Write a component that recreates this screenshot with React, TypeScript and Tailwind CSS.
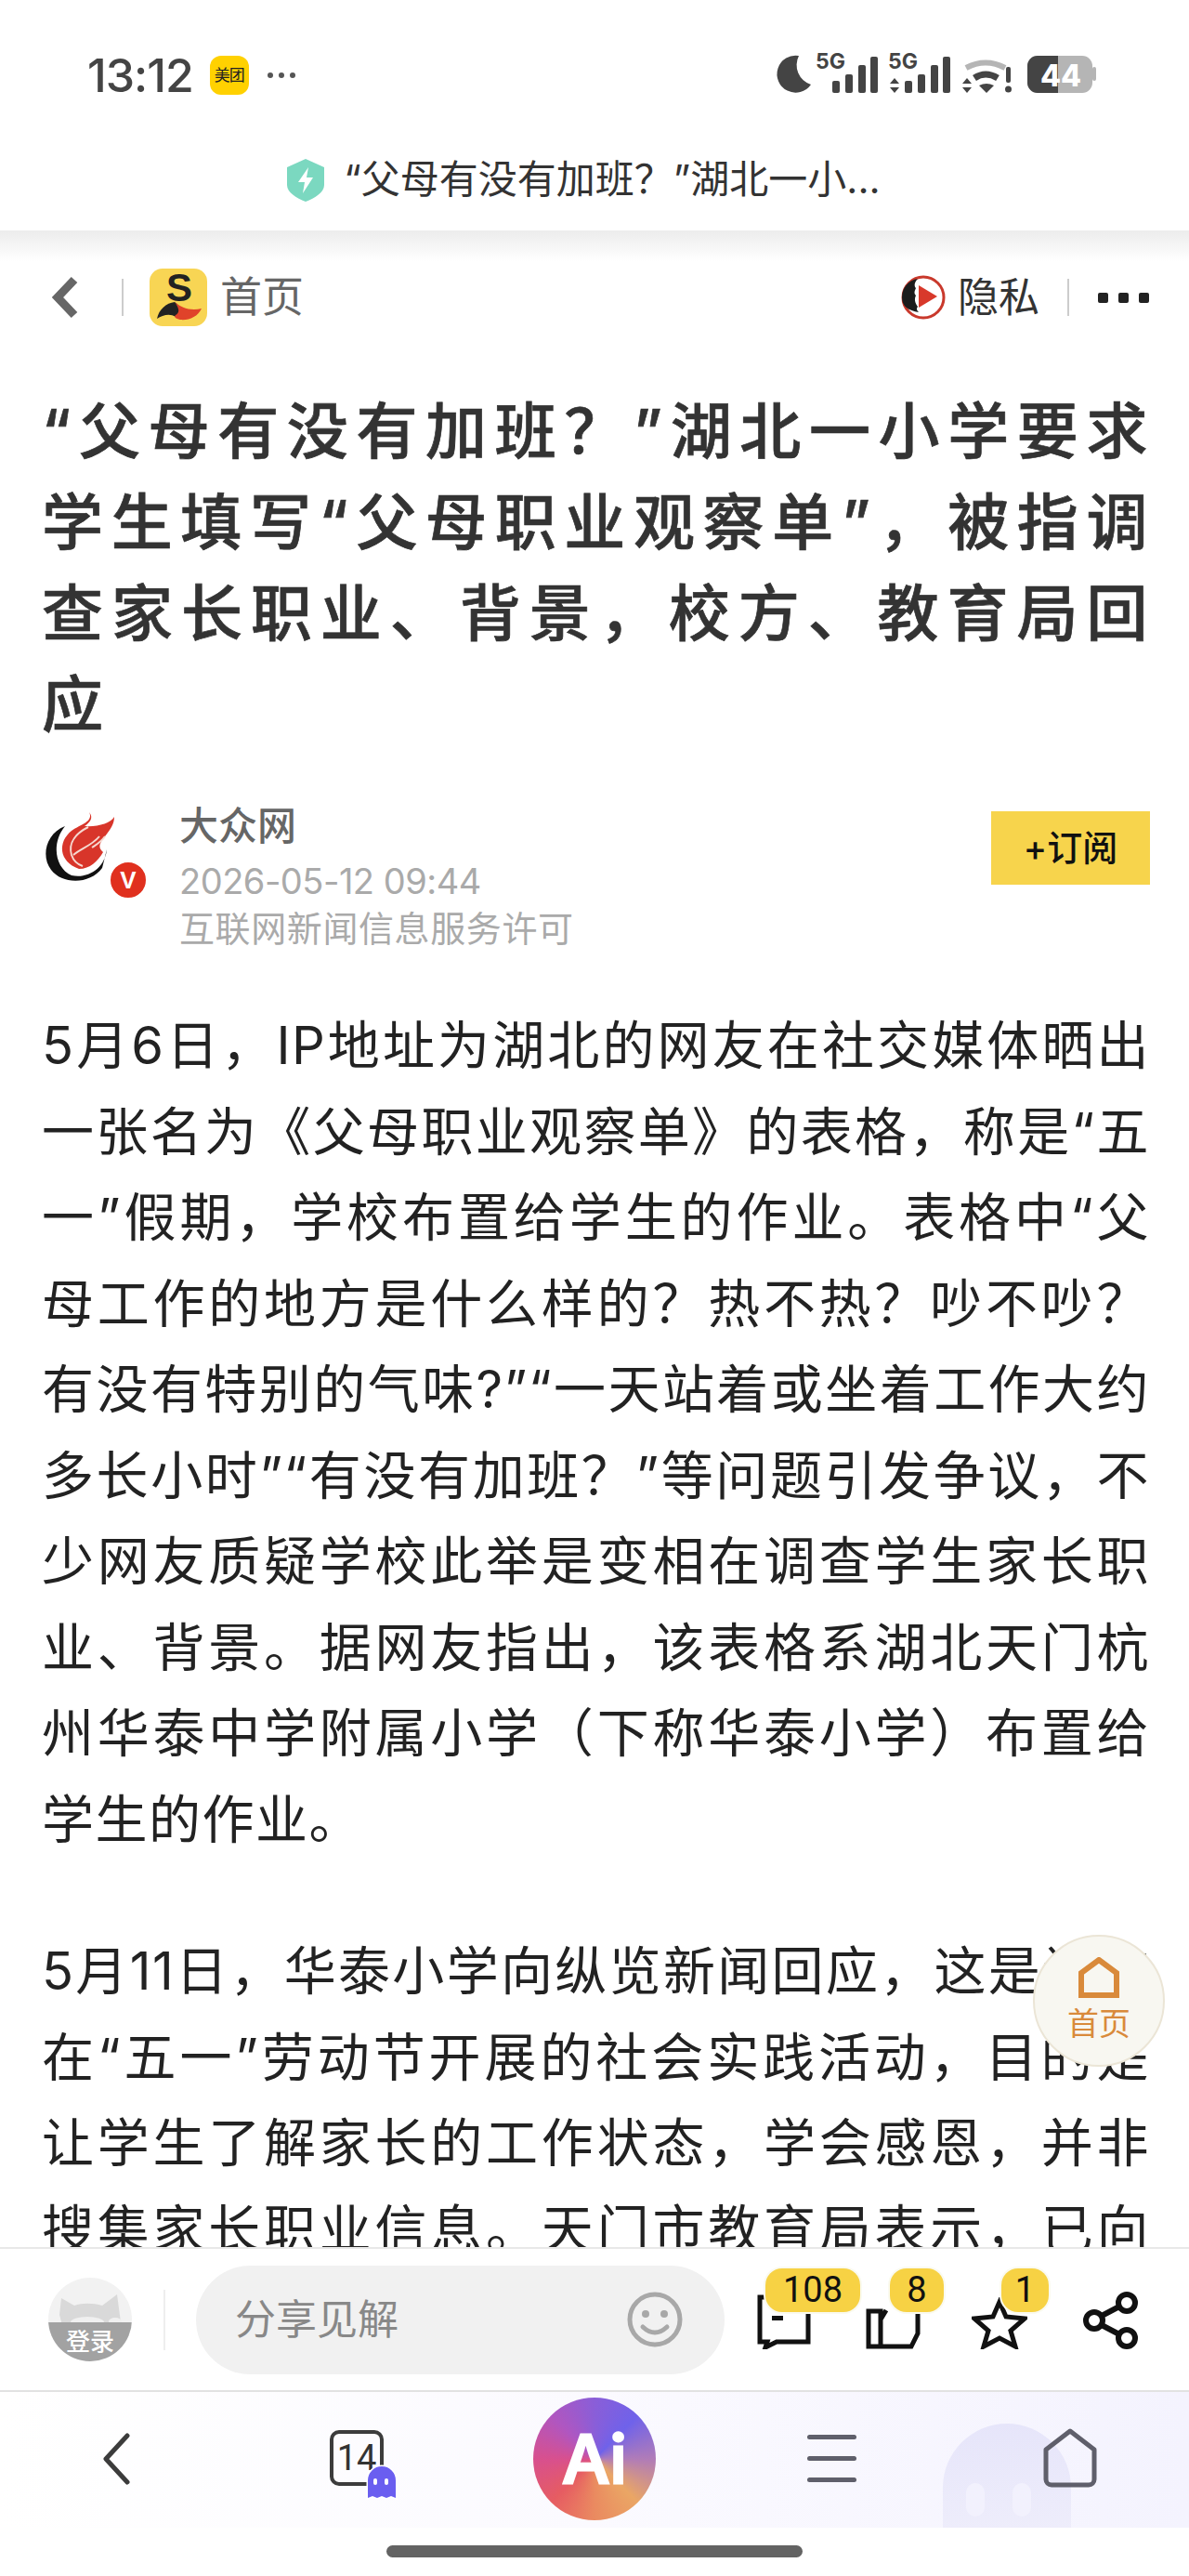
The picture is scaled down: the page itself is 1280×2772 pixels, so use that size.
import React from "react";

const FONT = "font-['Inter','Noto_Sans_CJK_SC','Noto_Sans',sans-serif]";

const titleLines = [
  "“父母有没有加班？”湖北一小学要求",
  "学生填写“父母职业观察单”，被指调",
  "查家长职业、背景，校方、教育局回",
  "应",
];
const p1 = [
  "5月6日，IP地址为湖北的网友在社交媒体晒出",
  "一张名为《父母职业观察单》的表格，称是“五",
  "一”假期，学校布置给学生的作业。表格中“父",
  "母工作的地方是什么样的？热不热？吵不吵？",
  "有没有特别的气味?”“一天站着或坐着工作大约",
  "多长小时”“有没有加班？”等问题引发争议，不",
  "少网友质疑学校此举是变相在调查学生家长职",
  "业、背景。据网友指出，该表格系湖北天门杭",
  "州华泰中学附属小学（下称华泰小学）布置给",
  "学生的作业。",
];
const p2 = [
  "5月11日，华泰小学向纵览新闻回应，这是该校",
  "在“五一”劳动节开展的社会实践活动，目的是",
  "让学生了解家长的工作状态，学会感恩，并非",
  "搜集家长职业信息。天门市教育局表示，已向",
];

function Lines({ lines, lastFull }: { lines: string[]; lastFull?: boolean }) {
  return (
    <>
      {lines.map((l, i) => (
        <div key={l} className={i < lines.length - 1 || lastFull ? "[text-align:justify] [text-align-last:justify]" : ""}>
          {l}
        </div>
      ))}
    </>
  );
}

function StatusIcons() {
  return (
    <svg width="370" height="56" viewBox="832 50 370 56" className="block">
      <path d="M860 60a20 20 0 1 0 13 31a22 22 0 0 1-13-31z" fill="#444" />
      <text x="878" y="74" fontFamily="Inter" fontWeight="700" fontSize="23" fill="#444">5G</text>
      <g fill="#444">
        <rect x="896" y="87" width="8" height="13" rx="2" />
        <rect x="910" y="80" width="8" height="20" rx="2" />
        <rect x="924" y="70" width="8" height="30" rx="2" />
        <rect x="937" y="61" width="8" height="39" rx="2" />
      </g>
      <text x="956" y="74" fontFamily="Inter" fontWeight="700" fontSize="23" fill="#444">5G</text>
      <g fill="#444">
        <path d="M963 84l5 6h-10zM963 100l5-6h-10z" />
        <rect x="974" y="87" width="8" height="13" rx="2" />
        <rect x="988" y="80" width="8" height="20" rx="2" />
        <rect x="1002" y="70" width="8" height="30" rx="2" />
        <rect x="1015" y="61" width="8" height="39" rx="2" />
        <path d="M1041 84l5 6h-10zM1041 100l5-6h-10z" />
      </g>
      <path d="M1040 73q21-11 42 0" stroke="#b5b5b5" strokeWidth="6" fill="none" />
      <path d="M1049 84q12-8 25 0" stroke="#444" strokeWidth="7" fill="none" />
      <path d="M1054 92q8-4 16 0l-8 8z" fill="#444" />
      <rect x="1083" y="72" width="5" height="17" rx="2" fill="#444" />
      <circle cx="1085.500" cy="96" r="3.500" fill="#444" />
      <rect x="1106" y="60" width="70" height="40" rx="11" fill="#b5b5b5" />
      <path d="M1117 60h22v40h-22a11 11 0 0 1-11-11v-18a11 11 0 0 1 11-11z" fill="#444" />
      <rect x="1176" y="72" width="4" height="15" rx="2" fill="#b5b5b5" />
      <text x="1120" y="93" fontFamily="Inter" fontWeight="800" fontSize="32" fill="#fff">44</text>
    </svg>
  );
}

function Flame() {
  return (
    <svg width="90" height="92" viewBox="10 8 90 92" className="block">
      <path d="M35 27C14 35 9 60 20 74c12 16 42 16 55-2l5-20c-2 20-20 32-38 28C24 72 20 45 35 27z" fill="#111" />
      <path d="M61 12c5 10-9 13-19 20C27 44 28 65 50 73c12 0 20-8 26-18-6-5-4-10 2-17 6-8 10-13 10-21-4 7-18 11-32 10 6-4 10-9 5-15z" fill="#d8352a" />
      <path d="M60 28c-12 6-22 16-18 30 2 6 6 10 12 12M72 38c-8 10-22 14-28 20M78 38c-4 6-8 8-14 12" stroke="#f6d8d0" strokeWidth="2" fill="none" />
    </svg>
  );
}

function App() {
  return (
    <div className={`relative w-[1280px] h-[2772px] overflow-hidden bg-white flex flex-col ${FONT}`}>
      {/* status bar */}
      <div className="h-[150px] shrink-0 flex items-start justify-between pt-[50px] pl-[94px] pr-[78px]">
        <div className="flex items-center gap-[18px] pt-[8px]">
          <span className="font-medium text-[50px] leading-[46px] text-[#444] tracking-[-1px]">13:12</span>
          <span className="w-[42px] h-[42px] rounded-[12px] bg-[#ffd100] flex items-center justify-center text-[17px] leading-none text-[#222] tracking-[-1px]">美团</span>
          <span className="flex gap-[6px] ml-[2px]">
            <i className="w-[6px] h-[6px] rounded-full bg-[#555]" />
            <i className="w-[6px] h-[6px] rounded-full bg-[#555]" />
            <i className="w-[6px] h-[6px] rounded-full bg-[#555]" />
          </span>
        </div>
        <StatusIcons />
      </div>

      {/* site title */}
      <div className="h-[98px] shrink-0 flex items-start justify-center gap-[20px] pt-[20px] pr-[24px]">
        <svg width="42" height="46" viewBox="0 0 42 46" className="block mt-[1px]">
          <path d="M21 0l20 9v19c0 8-10 14-20 18C11 42 1 36 1 28V9z" fill="#7bd8c0" />
          <path d="M24 9L13 25h7l-2 12 11-17h-7z" fill="#fff" />
        </svg>
        <span className="text-[42px] leading-[46px] text-[#333] whitespace-nowrap">“父母有没有加班？”湖北一小...</span>
      </div>

      {/* nav row */}
      <div className="shrink-0 h-[110px] bg-gradient-to-b from-[#ececec] via-white via-[30%] to-white flex items-center justify-between pt-[34px] pl-[55px] pr-[43px]">
        <div className="flex items-center">
          <svg width="30" height="46" viewBox="0 0 30 46" className="block">
            <path d="M25 4L7 23l18 19" stroke="#666" strokeWidth="9" fill="none" />
          </svg>
          <div className="w-[2px] h-[40px] bg-[#ccc] ml-[46px]" />
          <div className="w-[62px] h-[62px] rounded-[14px] bg-[#f8d554] ml-[28px] overflow-hidden">
            <svg width="62" height="62" viewBox="0 0 62 62" className="block">
              <text x="32" y="35" textAnchor="middle" fontFamily="Liberation Sans" fontWeight="700" fontSize="42" fill="#222">S</text>
              <path d="M8 54C10 44 18 37 27 36c3 2 5 4 7 8-2 6-4 8-6 8-6-4-14-2-20 2z" fill="#222" />
              <path d="M27 36c7 6 17 10 29 7-4 9-14 13-23 12-5-1-7-3-5-5 4-2 5-6-1-14z" fill="#e0432a" />
            </svg>
          </div>
          <span className="text-[45px] leading-[52px] text-[#666] ml-[14px]">首页</span>
        </div>
        <div className="flex items-center">
          <svg width="48" height="48" viewBox="0 0 48 48" className="block">
            <circle cx="24" cy="24" r="22" fill="#fff" stroke="#c9392c" strokeWidth="3" />
            <path d="M1 24C1 14 8 5 18 4c-4 4-4 8-2 10-2 4-2 6 0 8-2 4-1 8 2 12-2 2-1 4 1 6C8 38 1 34 1 24z" fill="#1c1c1c" />
            <path d="M19 11l20 12-20 12z" fill="#d8392b" />
          </svg>
          <span className="text-[44px] leading-[52px] text-[#333] ml-[13px]">隐私</span>
          <div className="w-[2px] h-[40px] bg-[#ccc] ml-[30px]" />
          <div className="flex gap-[11px] ml-[31px]">
            <i className="w-[11px] h-[11px] rounded-[2px] bg-[#222]" />
            <i className="w-[11px] h-[11px] rounded-[2px] bg-[#222]" />
            <i className="w-[11px] h-[11px] rounded-[2px] bg-[#222]" />
          </div>
        </div>
      </div>

      {/* article */}
      <div className="flex-1 min-h-0 overflow-hidden pl-[45px] pr-[42px] pt-[57px]">
        <h1 className="-mr-[4px] text-[66px] leading-[98px] font-medium text-[#333] tracking-[6.500px] [-webkit-text-stroke:0.7px_#333]">
          <Lines lines={titleLines} />
        </h1>
        <div className="flex items-start justify-between mt-[63px]">
          <div className="flex">
            <div className="relative w-[148px] h-[92px] shrink-0">
              <Flame />
              <div className="absolute left-[72px] top-[56px] w-[42px] h-[42px] rounded-full bg-[#e0301e] border-2 border-white flex items-center justify-center text-white font-['Liberation_Sans'] font-bold text-[26px] leading-none">V</div>
            </div>
            <div className="flex flex-col -mt-[6px]">
              <span className="text-[42px] leading-[50px] font-medium text-[#666]">大众网</span>
              <span className="text-[38px] leading-[56px] text-[#aaa] mt-[6px] tracking-[-0.500px]">2026-05-12 09:44</span>
              <span className="text-[38px] leading-[46px] text-[#aaa] tracking-[0.600px]">互联网新闻信息服务许可</span>
            </div>
          </div>
          <div className="w-[171px] h-[79px] mt-[3px] bg-[#f7d44c] flex items-center justify-center text-[38px] font-medium text-[#111]">+订阅</div>
        </div>
        <div className="mt-[57px] text-[56px] leading-[92.5px] text-[#222] tracking-[1.500px]">
          <Lines lines={p1} />
        </div>
        <div className="mt-[71px] text-[56px] leading-[92.5px] text-[#222] tracking-[1.500px]">
          <Lines lines={p2} lastFull />
        </div>
      </div>

      {/* toolbar */}
      <div className="relative shrink-0 h-[156px] border-t-2 border-b-2 border-t-[#e8e8e8] border-b-[#e2e2e2] bg-white flex items-center pl-[52px]">
        <div className="relative w-[90px] h-[90px] rounded-full bg-[#f2f2f2] overflow-hidden shrink-0">
          <svg width="90" height="90" viewBox="0 0 90 90" className="absolute left-0 top-0 block">
            <path d="M14 22l14 8c8-3 20-3 30 0l16-12 4 30-2 14H18L12 40z" fill="#d9d9d9" />
            <ellipse cx="42" cy="48" rx="18" ry="6" fill="#f0f0f0" />
            <ellipse cx="72" cy="47" rx="7" ry="4" fill="#f0f0f0" />
          </svg>
          <div className="absolute left-0 right-0 bottom-0 h-[42px] bg-[#a2a2a2] flex items-center justify-center text-[26px] leading-none text-white font-medium">登录</div>
        </div>
        <div className="w-[2px] h-[65px] bg-[#eeeeee] ml-[34px] shrink-0" />
        <div className="ml-[33px] w-[569px] h-[117px] rounded-full bg-[#f1f1f1] flex items-center justify-between pl-[42px] pr-[45px] shrink-0">
          <span className="text-[44px] text-[#888]">分享见解</span>
          <svg width="60" height="60" viewBox="0 0 60 60" className="block">
            <circle cx="30" cy="30" r="27" stroke="#a8a8a8" strokeWidth="5" fill="none" />
            <circle cx="20" cy="24" r="4" fill="#a8a8a8" />
            <circle cx="40" cy="24" r="4" fill="#a8a8a8" />
            <path d="M17 38q13 12 26 0" stroke="#a8a8a8" strokeWidth="5" fill="none" strokeLinecap="round" />
          </svg>
        </div>
        <svg width="60" height="60" viewBox="0 0 60 60" className="absolute left-[814px] top-[48px] block">
          <path d="M4 4v48h8l-2 6 12-6h34V4z" stroke="#111" strokeWidth="5" fill="none" />
          <rect x="17" y="24" width="12" height="5" fill="#111" />
        </svg>
        <svg width="60" height="46" viewBox="0 0 60 46" className="absolute left-[932px] top-[62px] block">
          <path d="M3 5h13v38H3zM16 43h33l7-14V2M22 4l-6 10" stroke="#111" strokeWidth="5" fill="none" />
        </svg>
        <svg width="60" height="56" viewBox="0 0 60 56" className="absolute left-[1046px] top-[52px] block">
          <path d="M30 5l7 16 20 2-15 13 5 17-17-9-17 9 5-17L3 23l20-2z" stroke="#111" strokeWidth="5" fill="none" />
        </svg>
        <svg width="62" height="62" viewBox="0 0 62 62" className="absolute left-[1165px] top-[46px] block">
          <circle cx="48" cy="12" r="9" stroke="#111" strokeWidth="6" fill="none" />
          <circle cx="13" cy="31" r="9" stroke="#111" strokeWidth="6" fill="none" />
          <circle cx="48" cy="50" r="9" stroke="#111" strokeWidth="6" fill="none" />
          <path d="M21 26l19-10M21 36l19 10" stroke="#111" strokeWidth="6" />
        </svg>
        <div className="absolute left-[824px] top-[21px] w-[102px] h-[47px] rounded-[18px] bg-[#f7d244] ring-2 ring-[#fafaf0] flex items-center justify-center font-['Roboto',sans-serif] text-[38px] text-[#111]">108</div>
        <div className="absolute left-[958px] top-[21px] w-[58px] h-[47px] rounded-[18px] bg-[#f7d244] ring-2 ring-[#fafaf0] flex items-center justify-center font-['Roboto',sans-serif] text-[38px] text-[#111]">8</div>
        <div className="absolute left-[1078px] top-[21px] w-[51px] h-[47px] rounded-[18px] bg-[#f7d244] ring-2 ring-[#fafaf0] flex items-center justify-center font-['Roboto',sans-serif] text-[38px] text-[#111]">1</div>
      </div>

      {/* browser nav */}
      <div className="relative shrink-0 h-[146px] bg-gradient-to-r from-white via-[#fbfaff] to-[#f4f3fe] overflow-hidden">
        <div className="absolute left-[1015px] top-[34px] w-[138px] h-[130px] rounded-t-[69px] bg-gradient-to-b from-[#e6e5fa] to-[#efeefb]">
          <i className="absolute left-[25px] top-[64px] w-[20px] h-[36px] rounded-full bg-[#f2f1fd]" />
          <i className="absolute left-[75px] top-[64px] w-[20px] h-[36px] rounded-full bg-[#f2f1fd]" />
        </div>
        <svg width="30" height="56" viewBox="0 0 30 56" className="absolute left-[110px] top-[44px] block">
          <path d="M27 3L4 28l23 25" stroke="#3c3c3c" strokeWidth="5" fill="none" strokeLinecap="round" strokeLinejoin="round" />
        </svg>
        <div className="absolute left-[355px] top-[41px] w-[58px] h-[60px] rounded-[10px] border-[4px] border-[#3c3c3c] flex items-center justify-center font-['Roboto',sans-serif] text-[38px] leading-none text-[#333]">14</div>
        <svg width="36" height="40" viewBox="-3 -3 36 40" className="absolute left-[393px] top-[77px] block">
          <path d="M0 15a15 15 0 0 1 30 0v19l-5-2-5 2-5-2-5 2-5-2-5 2z" fill="#6a5ef0" stroke="#fff" strokeWidth="3" paintOrder="stroke" />
          <rect x="6" y="13" width="4" height="7" rx="2" fill="#fff" />
          <rect x="18" y="13" width="4" height="7" rx="2" fill="#fff" />
        </svg>
        <div className="absolute left-[574px] top-[6px] w-[132px] h-[132px] rounded-full bg-[conic-gradient(from_45deg,#6f62ea,#b07cb8_12.500%,#eaa665_25%,#ea8a60_37.500%,#e65c62_50%,#d8508e_62.500%,#b056c0_75%,#8a5ed8_87.500%,#6f62ea)] flex items-center justify-center font-medium text-[72px] leading-none text-white [-webkit-text-stroke:3px_white]">Ai</div>
        <div className="absolute left-[869px] top-[46px] w-[53px] flex flex-col gap-[18px]">
          <i className="h-[5px] rounded-full bg-[#5f5f6b]" />
          <i className="h-[5px] rounded-full bg-[#5f5f6b]" />
          <i className="h-[5px] rounded-full bg-[#5f5f6b]" />
        </div>
        <svg width="60" height="64" viewBox="0 0 60 64" className="absolute left-[1122px] top-[39px] block">
          <path d="M30 3L56 23v32a6 6 0 0 1-6 6H10a6 6 0 0 1-6-6V23z" stroke="#5f5f6b" strokeWidth="5" fill="none" strokeLinejoin="round" />
        </svg>
      </div>

      {/* home indicator */}
      <div className="h-[52px] shrink-0 bg-white flex justify-center pt-[19px]">
        <div className="w-[448px] h-[13px] rounded-full bg-[#636363]" />
      </div>

      {/* floating home */}
      <div className="absolute left-[1112px] top-[2082px] w-[142px] h-[142px] rounded-full bg-[#f8f7f1] border-2 border-[#ebe5d6] flex flex-col items-center pt-[22px]">
        <svg width="44" height="44" viewBox="0 0 44 44" className="block">
          <path d="M22 3L41 17v24H3V17z" stroke="#d98a3b" strokeWidth="6" fill="none" />
        </svg>
        <span className="text-[34px] leading-[44px] mt-[6px] text-[#d98a3b]">首页</span>
      </div>
    </div>
  );
}

export default App;
